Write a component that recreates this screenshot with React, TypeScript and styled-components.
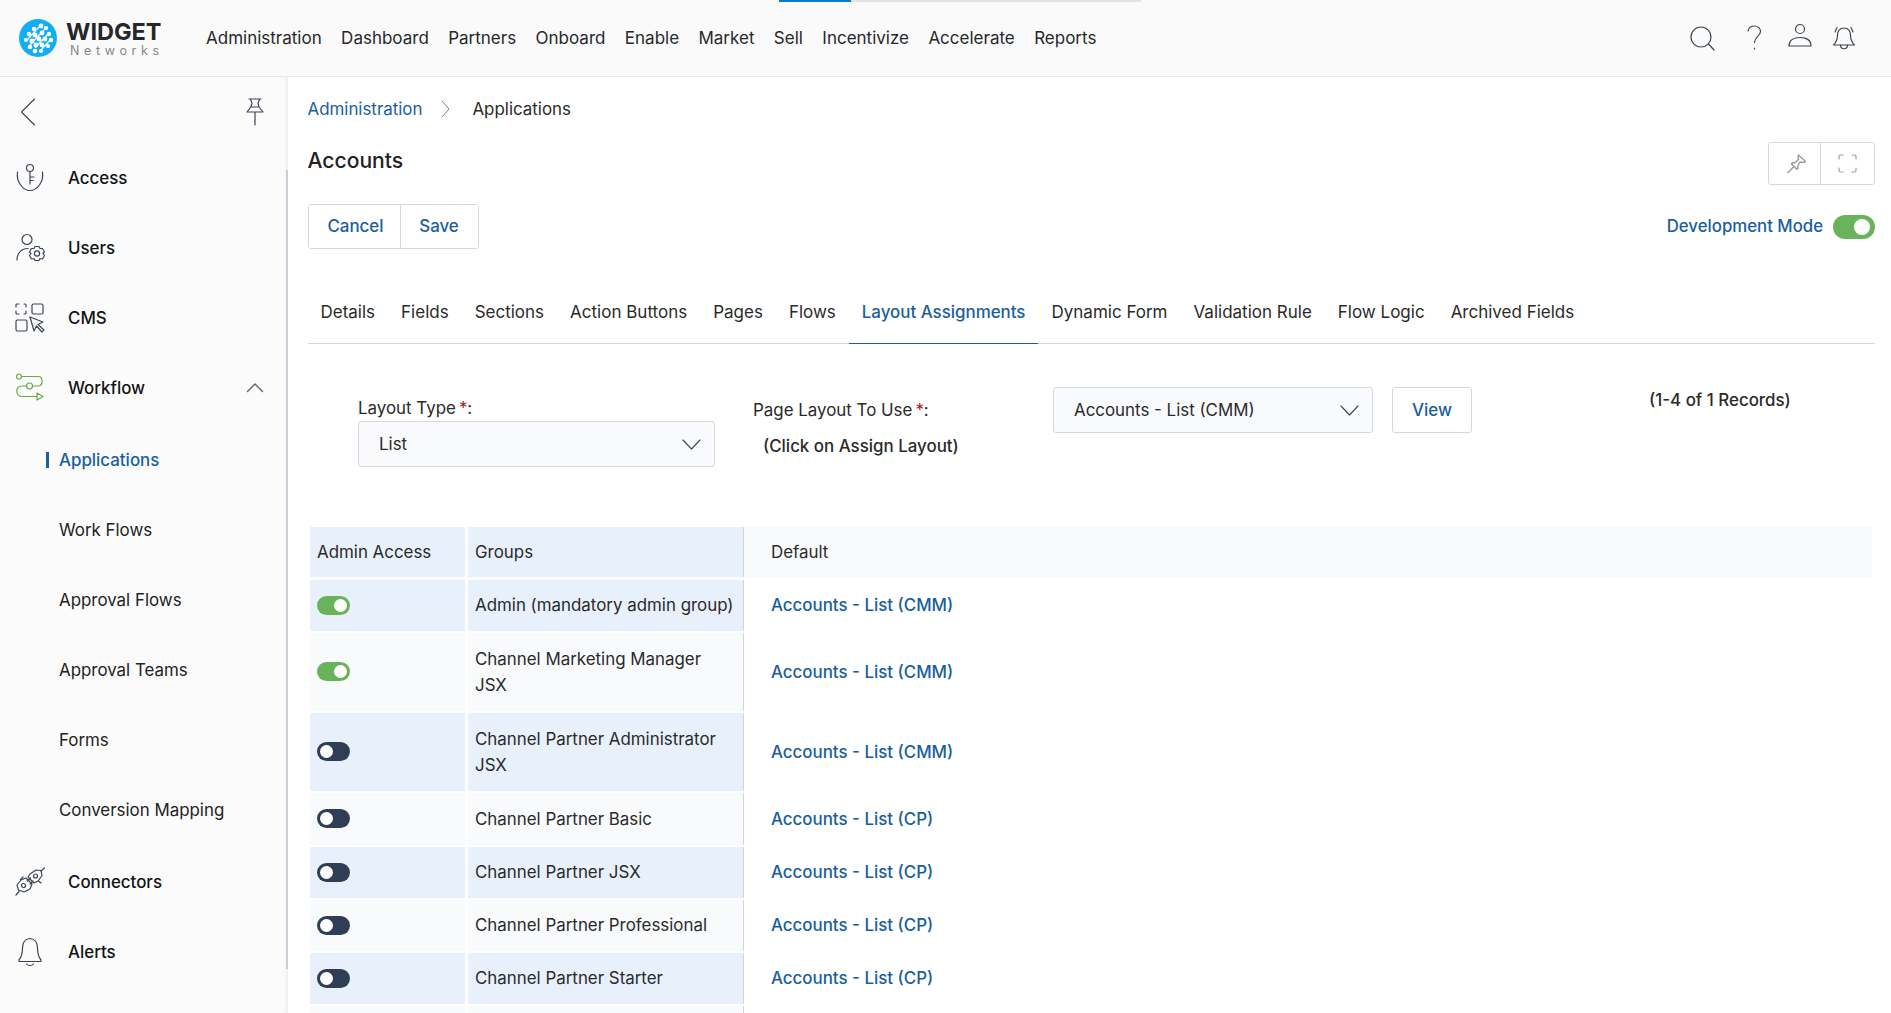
import React from "react";
import styled, { createGlobalStyle } from "styled-components";

const GlobalStyle = createGlobalStyle`
  html, body {
    margin: 0;
    height: 100%;
    overflow: hidden;
    background: #fff;
    font-family: "Inter", "Liberation Sans", sans-serif;
    color: #2a2a2a;
  }
  * { box-sizing: border-box; }
`;

const Page = styled.div`
  height: 1013px;
  overflow: hidden;
  display: flex;
  flex-direction: column;
`;

const Header = styled.header`
  position: relative;
  flex: 0 0 77px;
  display: flex;
  align-items: center;
  padding-left: 19px;
  background: #fafafa;
  border-bottom: 1px solid #e3e6ea;
`;

const LoadTrack = styled.div`
  position: absolute;
  top: 0;
  left: 779px;
  width: 362px;
  height: 2px;
  background: #e3e3e3;
`;

const LoadFill = styled.div`
  width: 72px;
  height: 2px;
  background: #0b78d0;
`;

const LogoBox = styled.div`
  display: flex;
  align-items: center;
  width: 187px;
`;

const LogoText = styled.div`
  margin-left: 9px;
  display: flex;
  flex-direction: column;
`;

const LogoName = styled.span`
  font-size: 23.5px;
  line-height: 24px;
  font-weight: 700;
  color: #25272b;
`;

const LogoSub = styled.span`
  font-size: 12.5px;
  line-height: 13px;
  margin-left: 4px;
  color: #85888d;
  letter-spacing: 4.6px;
`;

const Nav = styled.nav`
  display: flex;
  gap: 19.4px;
  font-size: 17px;
  color: #26282b;
`;

const HeaderIcons = styled.div`
  margin-left: auto;
  margin-right: 34px;
  display: flex;
  align-items: center;
`;

const HeaderIconSlot = styled.span<{ $gap: number }>`
  display: flex;
  margin-left: ${(p) => p.$gap}px;
`;

const Body = styled.div`
  flex: 1;
  display: flex;
  min-height: 0;
`;

const Sidebar = styled.aside`
  flex: 0 0 288px;
  position: relative;
  background: #fbfbfc;
  box-shadow: inset -4px 0 4px -3px #e6e8ec;
  padding: 19px 24px 0 15px;
`;

const SideScroll = styled.div`
  position: absolute;
  top: 93px;
  bottom: 44px;
  right: 0;
  width: 2px;
  background: #c9ced6;
`;

const SideTop = styled.div`
  display: flex;
  justify-content: space-between;
  align-items: center;
  height: 32px;
  margin-bottom: 14.8px;
  padding-left: 5px;
`;

const MainItem = styled.div`
  height: 70px;
  display: flex;
  align-items: center;
  font-size: 16.9px;
  font-weight: 500;
  color: #141414;
`;

const ItemIcon = styled.span`
  flex: 0 0 53px;
  display: flex;
  align-items: center;
`;

const Caret = styled.span`
  margin-left: auto;
  display: flex;
`;

const SubList = styled.div`
  margin: 2px 0;
`;

const SubItem = styled.div<{ $active?: boolean }>`
  position: relative;
  height: 70px;
  display: flex;
  align-items: center;
  padding-left: 44px;
  font-size: 16.9px;
  font-weight: ${(p) => (p.$active ? 500 : 400)};
  color: ${(p) => (p.$active ? "#1a5e9e" : "#222")};
  &::before {
    content: "";
    display: ${(p) => (p.$active ? "block" : "none")};
    position: absolute;
    left: 31px;
    top: 27px;
    width: 3px;
    height: 16px;
    background: #1a5e9e;
  }
`;

const Main = styled.main`
  flex: 1;
  min-width: 0;
  padding: 20px 16px 0 19.5px;
`;

const Breadcrumb = styled.div`
  display: flex;
  align-items: center;
  height: 24px;
  font-size: 16.9px;
`;

const CrumbLink = styled.span`
  color: #1a5e9e;
`;

const CrumbSep = styled.span`
  display: flex;
  margin: 0 22px 0 19px;
`;

const TitleRow = styled.div`
  display: flex;
  justify-content: space-between;
  align-items: flex-start;
  margin-top: 21px;
`;

const Title = styled.h1`
  margin: 1px 0 0;
  font-size: 21.1px;
  line-height: 36px;
  font-weight: 500;
  color: #222;
`;

const IconGroup = styled.div`
  display: flex;
  height: 43px;
  border: 1px solid #d5d9df;
  border-radius: 3px;
  background: #fff;
`;

const IconCell = styled.div<{ $w: number }>`
  width: ${(p) => p.$w}px;
  display: flex;
  align-items: center;
  justify-content: center;
  & + & {
    border-left: 1px solid #d5d9df;
  }
`;

const ActionRow = styled.div`
  display: flex;
  justify-content: space-between;
  align-items: center;
  margin-top: 19px;
`;

const ButtonGroup = styled.div`
  display: flex;
  height: 45px;
  border: 1px solid #d5d9df;
  border-radius: 3px;
`;

const TextButton = styled.button<{ $w: number; $shift?: number }>`
  width: ${(p) => p.$w}px;
  padding: 0 0 2px ${(p) => p.$shift ?? 0}px;
  border: none;
  background: #fff;
  font-family: inherit;
  font-size: 16.9px;
  font-weight: 500;
  color: #1a5e9e;
  & + & {
    border-left: 1px solid #d5d9df;
  }
`;

const DevMode = styled.div`
  display: flex;
  align-items: center;
  gap: 10px;
  font-size: 16.8px;
  font-weight: 500;
  color: #1a5e9e;
`;

const DevLabel = styled.span`
  padding-bottom: 2px;
`;

const Switch = styled.span<{ $on?: boolean; $large?: boolean }>`
  display: inline-block;
  position: relative;
  flex: none;
  width: ${(p) => (p.$large ? 42 : 33)}px;
  height: ${(p) => (p.$large ? 24 : 19)}px;
  border-radius: 12px;
  background: ${(p) => (p.$on ? "#69b35a" : "#2f3e55")};
  &::after {
    content: "";
    position: absolute;
    top: ${(p) => (p.$large ? 4 : 3)}px;
    ${(p) => (p.$on ? "right" : "left")}: ${(p) => (p.$large ? 5 : 3)}px;
    width: ${(p) => (p.$large ? 16 : 13)}px;
    height: ${(p) => (p.$large ? 16 : 13)}px;
    border-radius: 50%;
    background: #fff;
  }
`;

const Tabs = styled.div`
  display: flex;
  height: 63px;
  margin-top: 32px;
  border-bottom: 1px solid #d5d9df;
`;

const Tab = styled.div<{ $active?: boolean }>`
  height: 63px;
  display: flex;
  align-items: center;
  padding: 0 13px;
  font-size: ${(p) => (p.$active ? 16.9 : 17)}px;
  color: ${(p) => (p.$active ? "#1a5e9e" : "#2a2a2a")};
  font-weight: ${(p) => (p.$active ? 500 : 400)};
  border-bottom: 1px solid ${(p) => (p.$active ? "#1a5e9e" : "transparent")};
`;

const FormRow = styled.div`
  display: flex;
  align-items: flex-start;
  margin-top: 43px;
  padding-left: 50.5px;
`;

const LayoutCol = styled.div`
  flex: 0 0 395px;
  padding-top: 11px;
`;

const PageCol = styled.div`
  flex: 0 0 300px;
  padding-top: 13px;
`;

const FieldLabel = styled.div`
  font-size: 16.9px;
  line-height: 20px;
  color: #2a2a2a;
`;

const Star = styled.span`
  margin-left: 3px;
  color: #a01c1c;
`;

const HintText = styled.div`
  margin-top: 16px;
  padding-left: 10px;
  font-size: 16.9px;
  line-height: 20px;
  font-weight: 500;
`;

const Select = styled.div<{ $w: number }>`
  width: ${(p) => p.$w}px;
  height: 46px;
  display: flex;
  align-items: center;
  justify-content: space-between;
  padding: 0 13px 0 20px;
  background: #f8fafc;
  border: 1px solid #d5d9df;
  border-radius: 3px;
  font-size: 16.9px;
`;

const LayoutSelect = styled(Select)`
  margin-top: 3px;
`;

const ViewButton = styled.button`
  width: 80px;
  height: 46px;
  margin-left: 19px;
  border: 1px solid #d5d9df;
  border-radius: 3px;
  background: #fff;
  font-family: inherit;
  font-size: 16.9px;
  font-weight: 500;
  color: #1a5e9e;
`;

const Records = styled.div`
  margin-left: 177px;
  padding-top: 3px;
  font-size: 16.9px;
  line-height: 20px;
  font-weight: 500;
  white-space: nowrap;
`;

const Table = styled.div`
  display: flex;
  flex-direction: column;
  gap: 2px;
  margin: 60px 3px 0 2.5px;
`;

const GridRow = styled.div<{ $h: number }>`
  display: grid;
  grid-template-columns: 155px 276px 1fr;
  column-gap: 3px;
  height: ${(p) => p.$h}px;
  flex: none;
`;

const HeadRow = styled(GridRow)`
  margin-bottom: 1px;
`;

const Cell = styled.div<{ $blue?: boolean }>`
  display: flex;
  align-items: center;
  font-size: 16.9px;
  line-height: 26px;
  color: #2a2a2a;
  padding: 0 0 1px 7px;
  background: ${(p) => (p.$blue ? "#e8f1fb" : "#f8fafc")};
`;

const GroupCell = styled(Cell)`
  border-right: 1px solid #cfd6e0;
  padding-right: 8px;
`;

const DefaultCell = styled.div<{ $head?: boolean }>`
  display: flex;
  align-items: center;
  margin-left: -3px;
  padding: 0 0 1px 27px;
  font-size: 16.9px;
  font-weight: ${(p) => (p.$head ? 400 : 500)};
  color: ${(p) => (p.$head ? "#2a2a2a" : "#1a5e9e")};
  background: ${(p) => (p.$head ? "#f8fafc" : "transparent")};
`;

const StrokeSvg = styled.svg`
  display: block;
  fill: none;
  stroke: #3c4654;
  stroke-width: 1.2;
  stroke-linecap: round;
  stroke-linejoin: round;
`;

const GreenSvg = styled(StrokeSvg)`
  stroke: #6aaa3f;
`;

const RaisedSvg = styled(StrokeSvg)`
  margin-top: -4px;
`;

const ThinSvg = styled(StrokeSvg)`
  stroke-width: 1.1;
`;

const CaretSvg = styled(StrokeSvg)`
  stroke: #5b6068;
  stroke-width: 1.4;
`;

const CrumbSvg = styled(StrokeSvg)`
  stroke: #7a828c;
  stroke-width: 1;
`;

const TackSvg = styled(StrokeSvg)`
  margin-left: 5px;
  stroke: #9a9fa6;
  stroke-width: 1.5;
`;

const ExpandSvg = styled(StrokeSvg)`
  stroke: #9a9fa6;
`;

const Logo = () => (
  <svg width="38" height="38" viewBox="0 0 38 38">
    <circle cx="19" cy="19" r="19" fill="#12aef5" />
    <g stroke="#fff" strokeWidth="1.6" opacity="0.85">
      <path d="M8 21 L20 8 M11 26 L26 10 M16 29 L30 14 M22 31 L32 20" />
    </g>
    <g fill="#fff">
      {[
        [15, 10, 2.2], [22, 7, 2.4], [27, 9, 2.1], [10, 15, 2.2], [16, 16, 2.5], [23, 14, 2.4],
        [30, 15, 2.2], [7, 21, 2.1], [13, 22, 2.5], [20, 20, 2.4], [26, 20, 2.4], [32, 21, 2.2],
        [11, 28, 2.3], [17, 26, 2.4], [23, 26, 2.4], [29, 27, 2.1], [16, 32, 2.3], [22, 32, 2.1],
      ].map(([cx, cy, r]) => (
        <circle key={`${cx}-${cy}`} cx={cx} cy={cy} r={r} />
      ))}
    </g>
  </svg>
);

const SearchIcon = () => (
  <StrokeSvg width="26" height="26" viewBox="0 0 26 26">
    <circle cx="12" cy="12" r="10" />
    <path d="M19.5 19 L25 25" />
  </StrokeSvg>
);

const HelpIcon = () => (
  <StrokeSvg width="18" height="26" viewBox="0 0 18 26">
    <path d="M3 6 C4 2 7 1 9.5 1 C13 1 15.5 3.5 15.5 6.5 C15.5 11 9.5 12 9.5 17.5" />
    <path d="M9.5 23 V24" />
  </StrokeSvg>
);

const UserIcon = () => (
  <RaisedSvg width="26" height="26" viewBox="0 0 26 26">
    <circle cx="13" cy="6" r="4.5" />
    <path d="M2 23 C2 17 7 14.5 13 14.5 C19 14.5 24 17 24 23 Z" />
  </RaisedSvg>
);

const RingIcon = () => (
  <StrokeSvg width="26" height="26" viewBox="0 0 26 26">
    <path d="M13 3 C8.5 3 6.5 6.5 6.5 10 C6.5 14.5 5.5 17 2.5 20 H23.5 C20.5 17 19.5 14.5 19.5 10 C19.5 6.5 17.5 3 13 3 Z" />
    <path d="M9.5 20 C9.5 25 16.5 25 16.5 20" />
    <path d="M4 7 L6 2.5 M22 7 L20 2.5" />
  </StrokeSvg>
);

const BackIcon = () => (
  <ThinSvg width="16" height="28" viewBox="0 0 16 28">
    <path d="M14.5 1 L1.5 14 L14.5 27" />
  </ThinSvg>
);

const SidePinIcon = () => (
  <StrokeSvg width="18" height="28" viewBox="0 0 18 28">
    <path d="M3 1 H15 M4.5 1.5 L6 5 L5 9 L1 14 H17 L13 9 L12 5 L13.5 1.5 M5 9 H13 M9 14 V27" />
  </StrokeSvg>
);

const AccessIcon = () => (
  <StrokeSvg width="30" height="30" viewBox="0 0 30 30">
    <circle cx="15" cy="5" r="3.5" />
    <path d="M15 8.5 V21 M15 14 H19 M15 17.5 H18" />
    <path d="M2.5 9 C1 19 8 27.5 15 27.5 C22 27.5 29 19 27.5 9" />
  </StrokeSvg>
);

const UsersIcon = () => (
  <StrokeSvg width="30" height="30" viewBox="0 0 30 30">
    <circle cx="12" cy="6.5" r="5" />
    <path d="M2 27 C2 20 6.5 15.5 13 15.5" />
    <circle cx="22" cy="20.5" r="2.6" />
    <path d="M20 13.5 H24 L25 15.5 L27.5 15.5 L29.5 19 L28 20.5 L29.5 22.5 L27.5 26 L25 25.5 L24 27.5 H20 L19 25.5 L16.5 26 L14.5 22.5 L16 20.5 L14.5 19 L16.5 15.5 L19 15.5 Z" />
  </StrokeSvg>
);

const CmsIcon = () => (
  <StrokeSvg width="30" height="30" viewBox="0 0 30 30">
    <path d="M1 4 V2 Q1 1 2 1 H4 M9 1 H10 Q11 1 11 2 V4 M11 8 V10 Q11 11 10 11 H9 M4 11 H2 Q1 11 1 10 V8" />
    <rect x="17" y="1" width="11" height="10" rx="1.5" />
    <rect x="1" y="17" width="11" height="11" rx="1.5" />
    <path d="M15 14 L28 19 L23 21.5 L29 27 L27 29 L21.5 23 L19 28 Z" />
  </StrokeSvg>
);

const WorkflowIcon = () => (
  <GreenSvg width="30" height="30" viewBox="0 0 30 30">
    <circle cx="4" cy="3.5" r="2.5" />
    <path d="M6.5 3.5 H23 C28.5 3.5 28.5 13 23 13 H17.5" />
    <circle cx="14.5" cy="13" r="3" />
    <path d="M11.5 13 H7 C0 13 0 23.5 7 23.5 H21.5" />
    <path d="M22 20 L28 23.5 L22 27 Z" />
  </GreenSvg>
);

const ConnectorsIcon = () => (
  <StrokeSvg width="30" height="30" viewBox="0 0 30 30">
    <path d="M6 13 L11 11 L17 17 L15 22 L9 25 L3.5 23 L2 18 Z" />
    <circle cx="8.5" cy="18.5" r="2" />
    <path d="M15 7 L21 3 L26 3.5 L27 8.5 L23 14 L19 16 L13 10 Z" />
    <circle cx="20.5" cy="9" r="2" />
    <path d="M1 28 L4 24.5 M26 4 L29.5 1 M12.5 14 L15.5 11 M15 17 L18 14 M5.5 12.5 L8 10 M23.5 14 L26 16" />
  </StrokeSvg>
);

const BellIcon = () => (
  <StrokeSvg width="30" height="30" viewBox="0 0 30 30">
    <path d="M15 1.5 C10 2 7.5 6 7.5 11 C7.5 16.5 6.5 20 4 23 V24.5 H26 V23 C23.5 20 22.5 16.5 22.5 11 C22.5 6 20 2 15 1.5 Z" />
    <path d="M11.5 27 C13 29 17 29 18.5 27" />
  </StrokeSvg>
);

const CaretUp = () => (
  <CaretSvg width="18" height="12" viewBox="0 0 18 12">
    <path d="M1.5 9.5 L9 2 L16.5 9.5" />
  </CaretSvg>
);

const CrumbChevron = () => (
  <CrumbSvg width="9" height="18" viewBox="0 0 9 18">
    <path d="M1 1 L8 9 L1 17" />
  </CrumbSvg>
);

const TackIcon = () => (
  <TackSvg width="20" height="20" viewBox="0 0 20 20">
    <path d="M11.5 1 L18.5 7.5 L16.5 8.5 L13 8 L10.5 12.5 L11 14.5 L9.5 15 L4.5 10 L5.5 8.5 L7.5 9 L11.5 5.5 L11 3 Z" />
    <path d="M6.5 13 L1 18.5" />
  </TackSvg>
);

const ExpandIcon = () => (
  <ExpandSvg width="19" height="19" viewBox="0 0 19 19">
    <path d="M1 5 V2.5 Q1 1 2.5 1 H5 M14 1 H16.5 Q18 1 18 2.5 V5 M18 14 V16.5 Q18 18 16.5 18 H14 M5 18 H2.5 Q1 18 1 16.5 V14" />
  </ExpandSvg>
);

const SelectChevron = () => (
  <ThinSvg width="19" height="11" viewBox="0 0 19 11">
    <path d="M1 1 L9.5 10 L18 1" />
  </ThinSvg>
);

const navItems = ["Administration", "Dashboard", "Partners", "Onboard", "Enable", "Market", "Sell", "Incentivize", "Accelerate", "Reports"];
const tabs = ["Details", "Fields", "Sections", "Action Buttons", "Pages", "Flows", "Layout Assignments", "Dynamic Form", "Validation Rule", "Flow Logic", "Archived Fields"];
const subItems = ["Applications", "Work Flows", "Approval Flows", "Approval Teams", "Forms", "Conversion Mapping"];

const rows = [
  { on: true, h: 51, group: "Admin (mandatory admin group)", layout: "Accounts - List (CMM)" },
  { on: true, h: 78, group: "Channel Marketing Manager JSX", layout: "Accounts - List (CMM)" },
  { on: false, h: 78, group: "Channel Partner Administrator JSX", layout: "Accounts - List (CMM)" },
  { on: false, h: 52, group: "Channel Partner Basic", layout: "Accounts - List (CP)" },
  { on: false, h: 51, group: "Channel Partner JSX", layout: "Accounts - List (CP)" },
  { on: false, h: 51, group: "Channel Partner Professional", layout: "Accounts - List (CP)" },
  { on: false, h: 51, group: "Channel Partner Starter", layout: "Accounts - List (CP)" },
  { on: false, h: 51, group: "", layout: "" },
];

const App: React.FC = () => {
  return (
    <Page>
      <GlobalStyle />
      <Header>
        <LoadTrack>
          <LoadFill />
        </LoadTrack>
        <LogoBox>
          <Logo />
          <LogoText>
            <LogoName>WIDGET</LogoName>
            <LogoSub>Networks</LogoSub>
          </LogoText>
        </LogoBox>
        <Nav>
          {navItems.map((item) => (
            <span key={item}>{item}</span>
          ))}
        </Nav>
        <HeaderIcons>
          <HeaderIconSlot $gap={0}><SearchIcon /></HeaderIconSlot>
          <HeaderIconSlot $gap={30}><HelpIcon /></HeaderIconSlot>
          <HeaderIconSlot $gap={24}><UserIcon /></HeaderIconSlot>
          <HeaderIconSlot $gap={18}><RingIcon /></HeaderIconSlot>
        </HeaderIcons>
      </Header>
      <Body>
        <Sidebar>
          <SideScroll />
          <SideTop>
            <BackIcon />
            <SidePinIcon />
          </SideTop>
          <MainItem>
            <ItemIcon><AccessIcon /></ItemIcon>Access
          </MainItem>
          <MainItem>
            <ItemIcon><UsersIcon /></ItemIcon>Users
          </MainItem>
          <MainItem>
            <ItemIcon><CmsIcon /></ItemIcon>CMS
          </MainItem>
          <MainItem>
            <ItemIcon><WorkflowIcon /></ItemIcon>Workflow
            <Caret><CaretUp /></Caret>
          </MainItem>
          <SubList>
            {subItems.map((item, i) => (
              <SubItem key={item} $active={i === 0}>{item}</SubItem>
            ))}
          </SubList>
          <MainItem>
            <ItemIcon><ConnectorsIcon /></ItemIcon>Connectors
          </MainItem>
          <MainItem>
            <ItemIcon><BellIcon /></ItemIcon>Alerts
          </MainItem>
        </Sidebar>
        <Main>
          <Breadcrumb>
            <CrumbLink>Administration</CrumbLink>
            <CrumbSep><CrumbChevron /></CrumbSep>
            <span>Applications</span>
          </Breadcrumb>
          <TitleRow>
            <Title>Accounts</Title>
            <IconGroup>
              <IconCell $w={51}><TackIcon /></IconCell>
              <IconCell $w={54}><ExpandIcon /></IconCell>
            </IconGroup>
          </TitleRow>
          <ActionRow>
            <ButtonGroup>
              <TextButton $w={91} $shift={3}>Cancel</TextButton>
              <TextButton $w={78}>Save</TextButton>
            </ButtonGroup>
            <DevMode>
              <DevLabel>Development Mode</DevLabel>
              <Switch $on $large />
            </DevMode>
          </ActionRow>
          <Tabs>
            {tabs.map((tab) => (
              <Tab key={tab} $active={tab === "Layout Assignments"}>{tab}</Tab>
            ))}
          </Tabs>
          <FormRow>
            <LayoutCol>
              <FieldLabel>Layout Type<Star>*</Star>:</FieldLabel>
              <LayoutSelect $w={357}>
                List
                <SelectChevron />
              </LayoutSelect>
            </LayoutCol>
            <PageCol>
              <FieldLabel>Page Layout To Use<Star>*</Star>:</FieldLabel>
              <HintText>(Click on Assign Layout)</HintText>
            </PageCol>
            <Select $w={320}>
              Accounts - List (CMM)
              <SelectChevron />
            </Select>
            <ViewButton>View</ViewButton>
            <Records>(1-4 of 1 Records)</Records>
          </FormRow>
          <Table>
            <HeadRow $h={50}>
              <Cell $blue>Admin Access</Cell>
              <GroupCell $blue>Groups</GroupCell>
              <DefaultCell $head>Default</DefaultCell>
            </HeadRow>
            {rows.map((row, i) => (
              <GridRow key={i} $h={row.h}>
                <Cell $blue={i % 2 === 0}>
                  {row.group && <Switch $on={row.on} />}
                </Cell>
                <GroupCell $blue={i % 2 === 0}>
                  <span>{row.group}</span>
                </GroupCell>
                <DefaultCell>{row.layout}</DefaultCell>
              </GridRow>
            ))}
          </Table>
        </Main>
      </Body>
    </Page>
  );
};

export default App;
